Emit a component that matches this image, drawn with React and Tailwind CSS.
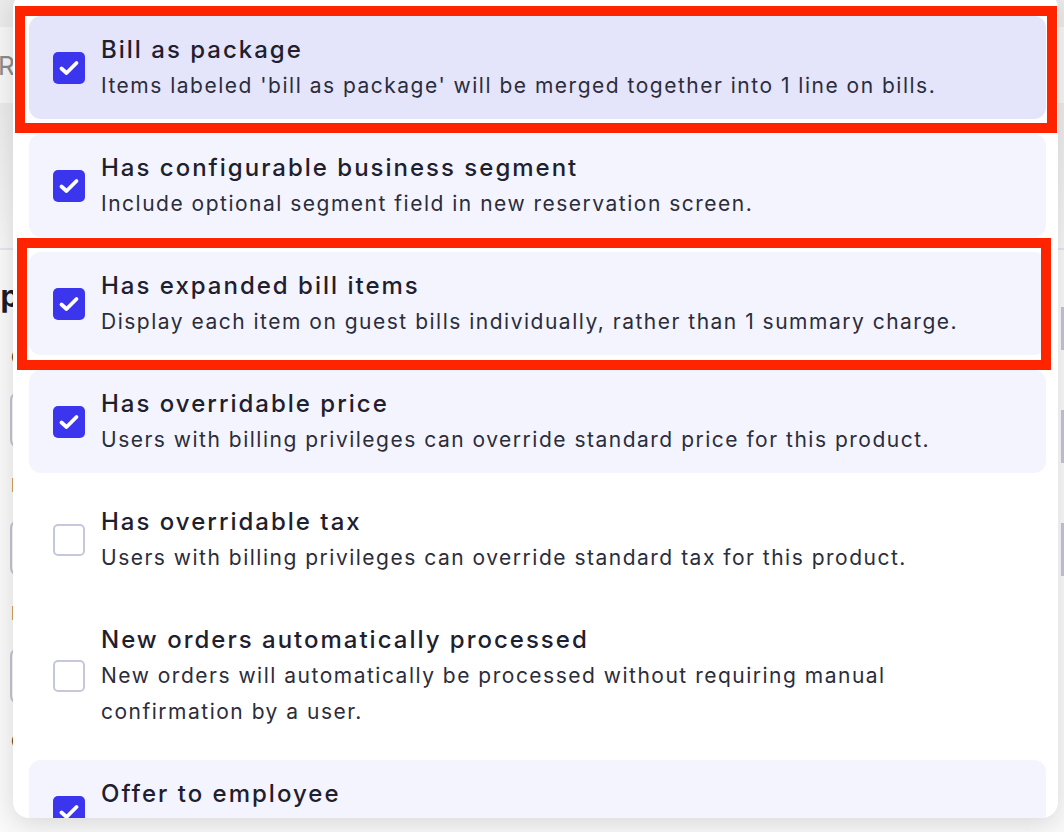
const options = [
  {
    title: "Bill as package",
    desc: "Items labeled 'bill as package' will be merged together into 1 line on bills.",
    checked: true,
    active: true,
  },
  {
    title: "Has configurable business segment",
    desc: "Include optional segment field in new reservation screen.",
    checked: true,
  },
  {
    title: "Has expanded bill items",
    desc: "Display each item on guest bills individually, rather than 1 summary charge.",
    checked: true,
  },
  {
    title: "Has overridable price",
    desc: "Users with billing privileges can override standard price for this product.",
    checked: true,
  },
  {
    title: "Has overridable tax",
    desc: "Users with billing privileges can override standard tax for this product.",
    checked: false,
  },
  {
    title: "New orders automatically processed",
    desc: "New orders will automatically be processed without requiring manual confirmation by a user.",
    checked: false,
  },
  {
    title: "Offer to employee",
    desc: "Employees can purchase this product at the staff rate.",
    checked: true,
  },
];

function Checkbox({ checked }) {
  if (checked) {
    return (
      <div className="flex h-8 w-8 shrink-0 items-center justify-center rounded-[5px] bg-[#3b36ee]">
        <svg width="24" height="24" viewBox="0 0 24 24" fill="none">
          <path
            d="M4.5 12.5l5 4.5L19.5 7"
            stroke="white"
            strokeWidth="3.8"
            strokeLinecap="round"
            strokeLinejoin="round"
          />
        </svg>
      </div>
    );
  }
  return <div className="h-8 w-8 shrink-0 rounded-[5px] border-2 border-[#c7c7dc] bg-white" />;
}

function OptionRow({ option }) {
  const bg = option.active
    ? "bg-[#e4e4fb]"
    : option.checked
    ? "bg-[#f4f4fe]"
    : "bg-white";

  return (
    <div className={`flex items-center gap-4 rounded-xl pl-6 pr-4 pt-4 pb-[15px] ${bg}`}>
      <Checkbox checked={option.checked} />
      <div className="max-w-[880px]">
        <div className="text-[24px] font-medium leading-[36px] tracking-[2px] text-[#1f202e]">
          {option.title}
        </div>
        <div className="text-[21px] leading-[36px] tracking-[1.5px] text-[#2b2d3b]">
          {option.desc}
        </div>
      </div>
    </div>
  );
}

export default function App() {
  return (
    <div className="relative h-[832px] w-[1064px] overflow-hidden bg-[#fafafa] font-['Inter',sans-serif]">
      {/* page behind the menu */}
      <div className="flex flex-col">
        <div className="h-[27px] bg-[#ececec]" />
        <div className="flex h-[76px] items-center bg-[#f7f7f7] text-[26px] text-[#8c8c8c]">
          <span className="-ml-[2px]">Re</span>
        </div>
        <div className="h-[145px] bg-gradient-to-b from-[#ebebeb] to-[#f7f7f7]" />
        <div className="h-[2px] bg-[#e6e6ee]" />
        <div className="flex flex-col pt-[26px]">
          <div className="-ml-[22px] text-[30px] font-bold leading-[40px] text-[#1c1c28]">App</div>
          <div className="ml-[11px] mt-[30px] text-[18px] leading-[24px] text-[#333]">Code</div>
          <div className="ml-[10px] mt-[22px] h-[56px] w-[300px] rounded-lg border-2 border-[#c4c4d6]" />
          <div className="ml-[11px] mt-[26px] text-[18px] leading-[24px] text-[#333]">Label</div>
          <div className="ml-[10px] mt-[22px] h-[56px] w-[300px] rounded-lg border-2 border-[#c4c4d6]" />
          <div className="ml-[11px] mt-[26px] text-[18px] leading-[24px] text-[#333]">Label</div>
          <div className="ml-[10px] mt-[22px] h-[56px] w-[300px] rounded-lg border-2 border-[#c4c4d6]" />
          <div className="ml-[11px] mt-[26px] text-[18px] leading-[24px] text-[#333]">Code</div>
        </div>
      </div>

      {/* right edge fields behind the menu */}
      <div className="absolute right-0 top-[307px] flex flex-col gap-[60px]">
        <div className="h-[43px] w-[3px] bg-[#c4c4d6]" />
        <div className="h-[53px] w-[3px] bg-[#c4c4d6]" />
        <div className="h-[53px] w-[3px] bg-[#c4c4d6]" />
      </div>

      {/* menu */}
      <div className="absolute left-[13px] top-[-8px] h-[826px] w-[1045px] overflow-hidden rounded-2xl bg-white shadow-[0_6px_28px_rgba(0,0,0,0.14)]">
        <div className="flex flex-col gap-[15px] pl-4 pr-3 pt-6">
          {options.map((option) => (
            <OptionRow key={option.title} option={option} />
          ))}
        </div>
      </div>

      {/* annotation boxes */}
      <div className="pointer-events-none absolute left-[15px] top-[6px] h-[127px] w-[1042px] border-[10px] border-[#ff2400]" />
      <div className="pointer-events-none absolute left-[17px] top-[238px] h-[132px] w-[1034px] border-[10px] border-[#ff2400]" />
    </div>
  );
}
